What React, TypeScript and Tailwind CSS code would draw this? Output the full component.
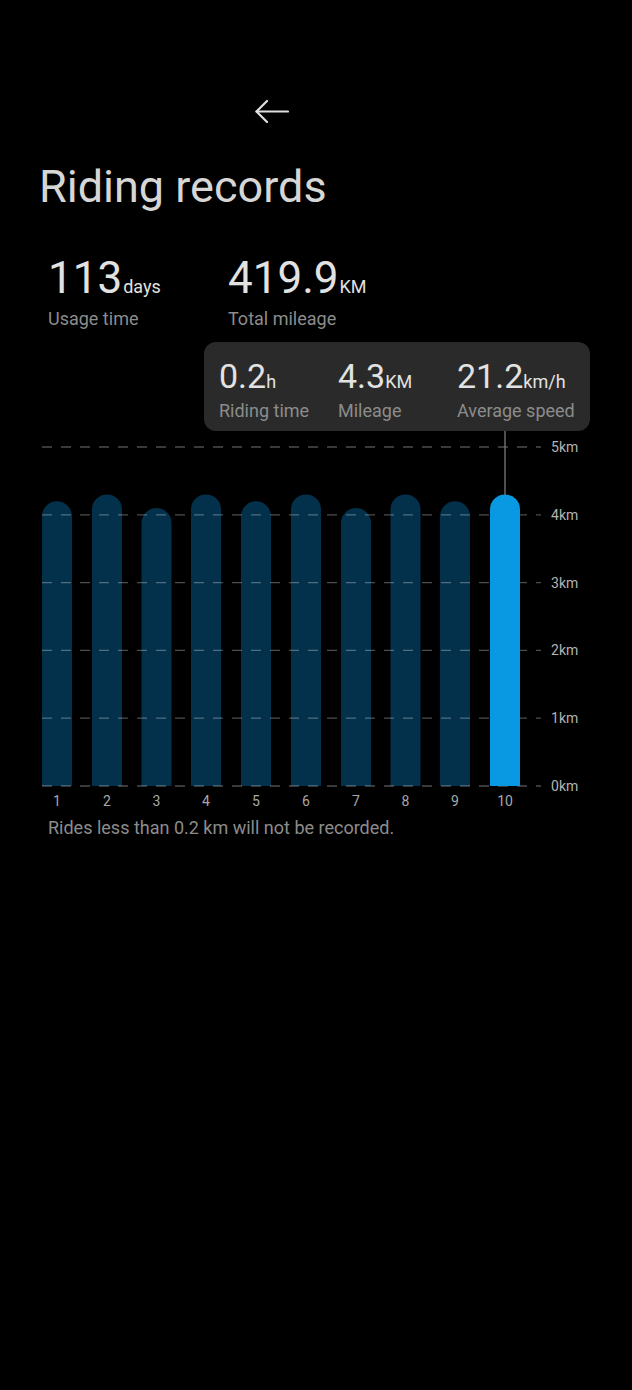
import React from "react";

const values = [4.2, 4.3, 4.1, 4.3, 4.2, 4.3, 4.1, 4.3, 4.2, 4.3];
const Y0 = 445; // 0km in svg coords
const STEP = 67.8;
const BAR_W = 30;
const centers = [57, 107, 156.5, 206, 256, 306, 356, 405.5, 455, 505];

function barPath(cx: number, v: number) {
  const top = Y0 - v * STEP;
  const r = BAR_W / 2;
  const l = cx - r;
  const rr = cx + r;
  return `M${l} ${Y0} V${top + r} A${r} ${r} 0 0 1 ${rr} ${top + r} V${Y0} Z`;
}

function Chart() {
  const grid = [0, 1, 2, 3, 4, 5];
  return (
    <svg width="632" height="478" viewBox="0 0 632 478" className="block">
      {values.slice(0, 9).map((v, i) => (
        <path key={i} d={barPath(centers[i], v)} fill="#03314b" />
      ))}
      {grid.map((g) => (
        <line
          key={g}
          x1="42"
          x2="541"
          y1={Y0 - g * STEP}
          y2={Y0 - g * STEP}
          stroke="rgba(255,255,255,0.3)"
          strokeWidth="1.3"
          strokeDasharray="10 9"
        />
      ))}
      <path d={barPath(centers[9], values[9])} fill="#0998e2" />
      <line x1="505" x2="505" y1="90" y2={Y0 - values[9] * STEP + 1} stroke="#7a7a7a" strokeWidth="1.3" />
      {grid.map((g) => (
        <text
          key={g}
          x="551"
          y={Y0 - g * STEP + 5}
          fill="#b3b3b3"
          fontSize="14"
          fontFamily="Roboto, sans-serif"
        >
          {g}km
        </text>
      ))}
      {centers.map((c, i) => (
        <text
          key={i}
          x={c}
          y={465}
          textAnchor="middle"
          fill="#a8a8a8"
          fontSize="14"
          fontFamily="Roboto, sans-serif"
        >
          {i + 1}
        </text>
      ))}
    </svg>
  );
}

function TipItem({ value, unit, label, w }: { value: string; unit: string; label: string; w: string }) {
  return (
    <div className={`flex flex-col ${w}`}>
      <div className="flex items-baseline">
        <span className="text-[34px] leading-[34px] text-[#e2e2e2]">{value}</span>
        <span className="text-[18px] leading-[18px] text-[#e2e2e2]">{unit}</span>
      </div>
      <div className="mt-[9px] text-[18px] leading-[18px] text-[#8c8c8c] whitespace-nowrap">{label}</div>
    </div>
  );
}

export default function App() {
  return (
    <div className="min-h-[1390px] w-[632px] bg-black font-['Roboto',sans-serif] text-[#e2e2e2]">
      <div className="pt-[99px] pl-[255px]">
        <svg width="34" height="25" viewBox="0 0 34 25" fill="none" stroke="#e0e0e0" strokeWidth="2.2" strokeLinecap="round" strokeLinejoin="round">
          <path d="M1.5 12.5 H33" />
          <path d="M12 2 L1.5 12.5 L12 23" />
        </svg>
      </div>
      <h1 className="mt-[40px] pl-[39px] text-[45px] leading-[45px] font-normal text-[#d6d6d6]">Riding records</h1>
      <div className="mt-[47px] flex pl-[48px]">
        <div className="w-[180px] flex flex-col">
          <div className="flex items-baseline">
            <span className="text-[44px] leading-[44px]">113</span>
            <span className="text-[18px] leading-[18px] ml-[1px]">days</span>
          </div>
          <div className="mt-[10px] text-[18px] leading-[18px] text-[#8c8c8c]">Usage time</div>
        </div>
        <div className="flex flex-col">
          <div className="flex items-baseline">
            <span className="text-[44px] leading-[44px]">419.9</span>
            <span className="text-[18px] leading-[18px] ml-[1px]">KM</span>
          </div>
          <div className="mt-[10px] text-[18px] leading-[18px] text-[#8c8c8c]">Total mileage</div>
        </div>
      </div>
      <div className="relative mt-[13px]">
        <Chart />
        <div className="absolute left-[204px] top-[1px] w-[386px] h-[89px] rounded-[12px] bg-[#2a2a2a] pt-[17px] pl-[15px] flex">
          <TipItem value="0.2" unit="h" label="Riding time" w="w-[119px]" />
          <TipItem value="4.3" unit="KM" label="Mileage" w="w-[119px]" />
          <TipItem value="21.2" unit="km/h" label="Average speed" w="w-[130px]" />
        </div>
      </div>
      <p className="pl-[48px] text-[18px] leading-[18px] text-[#8c8c8c]">Rides less than 0.2 km will not be recorded.</p>
    </div>
  );
}
